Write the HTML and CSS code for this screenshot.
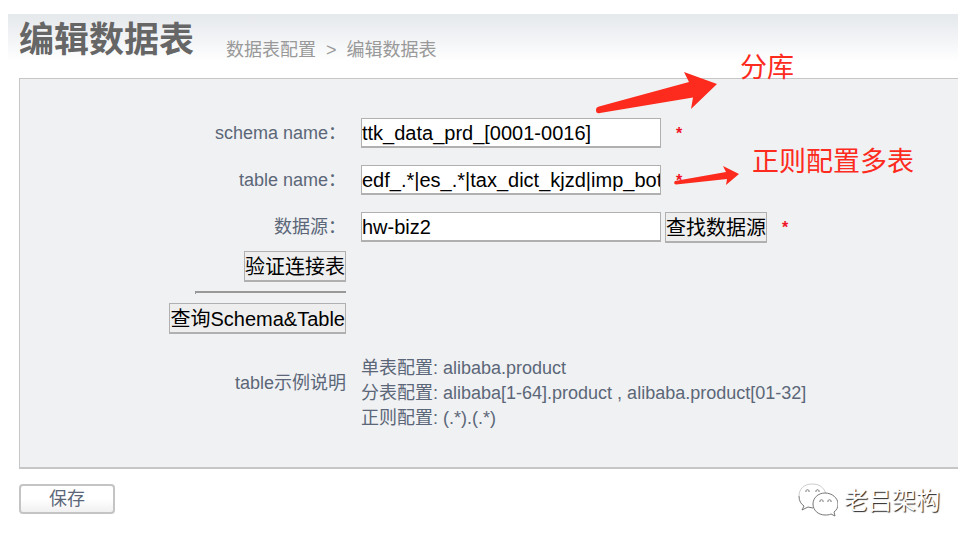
FILE: index.html
```html
<!DOCTYPE html>
<html lang="zh-CN">
<head>
<meta charset="utf-8">
<title>编辑数据表</title>
<link rel="stylesheet" href="styles.css">
</head>
<body>
<main class="page">
  <header class="page-header">
    <h1 class="title">编辑数据表</h1>
    <nav class="breadcrumb"><a href="#">数据表配置</a><span>&gt;</span><span>编辑数据表</span></nav>
  </header>
  <form class="form">
    <div class="panel">
      <div class="row">
        <label class="label" for="schema">schema name：</label>
        <div class="field"><input class="input" id="schema" type="text" value="ttk_data_prd_[0001-0016]"><span class="required">*</span></div>
      </div>
      <div class="row">
        <label class="label" for="table">table name：</label>
        <div class="field"><input class="input" id="table" type="text" value="edf_.*|es_.*|tax_dict_kjzd|imp_bot_.*"><span class="required">*</span></div>
      </div>
      <div class="row">
        <label class="label" for="source">数据源：</label>
        <div class="field"><input class="input" id="source" type="text" value="hw-biz2"><button class="button" type="button">查找数据源</button><span class="required">*</span></div>
      </div>
      <div class="actions">
        <button class="button" type="button">验证连接表</button>
        <hr class="rule">
        <button class="button" type="button">查询Schema&amp;Table</button>
      </div>
      <div class="row row-help">
        <div class="label">table示例说明</div>
        <div class="help">
          <p>单表配置: alibaba.product</p>
          <p>分表配置: alibaba[1-64].product , alibaba.product[01-32]</p>
          <p>正则配置: (.*).(.*)</p>
        </div>
      </div>
    </div>
    <button class="save" type="submit">保存</button>
  </form>
  <svg class="arrow arrow-schema" viewBox="0 0 124 44" aria-hidden="true"><path d="M3 34.500 93 10 88 0 121 12 95 37 97 25.500 4 41Q0 42 0 38 0 35 3 34.500Z"/></svg>
  <span class="note note-schema">分库</span>
  <svg class="arrow arrow-table" viewBox="0 0 68 22" aria-hidden="true"><path d="M1 15 52 6 49 0 65 8 52 19 53 13 2 18.500Q-1 18 1 15Z"/></svg>
  <span class="note note-table">正则配置多表</span>
  <div class="watermark">
    <svg class="chat" viewBox="0 0 40 36" aria-hidden="true">
      <path class="faint" d="M28 11C26 4 21 1 14 1 6 1 1 6 1 13"/>
      <path d="M1 13c0 5 2 8 5 10l-2 4 6-3 5 1"/>
      <path d="M27 10c-7 0-12 5-12 11s5 11 12 11c2 0 4 0 6-1l4 2-1-4c3-2 4-5 4-8 0-6-6-11-13-11Z"/>
      <path d="M8 9c-1-3 4-3 3 0M18 9c-1-3 4-3 3 0M22 19c-1-3 4-3 3 0M30 19c-1-3 4-3 3 0"/>
    </svg>
    <span>老吕架构</span>
  </div>
</main>
</body>
</html>
```
FILE: styles.css
```css
* {
  box-sizing: border-box;
}

body {
  margin: 0;
  padding: 14px 14px 0 8px;
  background: #fff;
  color: #5b6778;
  font: 18px/25px "Liberation Sans", "Noto Sans CJK SC", sans-serif;
}

.page {
  position: relative;
  min-height: calc(100vh - 14px);
}

.page-header {
  display: flex;
  gap: 32px;
  height: 64px;
  padding-left: 11px;
  background: linear-gradient(#e5e8ec, #fff 48px);
}

.title {
  margin: 0;
  color: #666;
  font-size: 35px;
  line-height: 52px;
}

.breadcrumb {
  display: flex;
  gap: 10px;
  padding-top: 24px;
  color: #999;
}

.breadcrumb a {
  color: inherit;
  text-decoration: none;
}

.form {
  padding-left: 11px;
}

.panel {
  display: flex;
  flex-direction: column;
  padding: 39px 0 19px;
  border: 1px solid #c6c6c6;
  border-right: 0;
  border-bottom-width: 2px;
  background: #f0f1f3;
}

.row {
  display: grid;
  grid-template-columns: 326px 1fr;
  column-gap: 15px;
  align-items: center;
  margin-bottom: 17px;
}

.row-help {
  align-items: start;
}

.row-help .label {
  padding-top: 15px;
}

.label {
  text-align: right;
}

.field {
  display: flex;
  align-items: center;
  height: 30px;
}

.input {
  width: 300px;
  height: 30px;
  padding: 1px 0 0;
  border: 1px solid #b0b0b0;
  border-bottom-width: 2px;
  background: #fff;
  color: #000;
  font: inherit;
  font-size: 20px;
}

.required {
  margin-left: 15px;
  color: #f01428;
  font-size: 16px;
  font-weight: bold;
}

.button {
  height: 31px;
  padding: 3px 0 0;
  border: 1px solid #b0b0b0;
  border-bottom-width: 2px;
  background: #eee;
  color: #000;
  font: inherit;
  font-size: 20px;
  white-space: nowrap;
}

.field .button {
  margin-left: 4px;
}

.actions {
  display: flex;
  flex-direction: column;
  align-items: flex-end;
  gap: 9px;
  width: 326px;
  margin: -8px 0 22px;
}

.rule {
  width: 151px;
  height: 3px;
  margin: 0;
  border: 1px solid #999;
  border-width: 2px 0 0 1px;
}

.help p {
  margin: 0;
}

.save {
  display: block;
  width: 96px;
  height: 30px;
  margin-top: 15px;
  padding: 0;
  border: 2px solid #c4c4c4;
  border-radius: 4px;
  background: linear-gradient(#fff 50%, #f0f0f0);
  color: #5b6778;
  font: inherit;
}

.arrow {
  position: absolute;
  fill: #fd2b1d;
}

.arrow-schema {
  top: 58px;
  left: 588px;
  width: 124px;
}

.arrow-table {
  top: 152px;
  left: 666px;
  width: 68px;
}

.note {
  position: absolute;
  color: #fd2b1d;
  font-size: 27px;
  line-height: 36px;
}

.note-schema {
  top: 36px;
  left: 732px;
}

.note-table {
  top: 130px;
  left: 744px;
}

.watermark {
  position: absolute;
  right: 18px;
  bottom: 25px;
  display: flex;
  align-items: center;
  gap: 6px;
  color: #fff;
  font-size: 24px;
  line-height: 36px;
  text-shadow: 1px 1px 1px #222;
}

.chat {
  width: 40px;
  height: 36px;
  fill: #fff;
  stroke: #777;
  stroke-width: 1;
}

.chat .faint {
  stroke: #ccc;
}
```
